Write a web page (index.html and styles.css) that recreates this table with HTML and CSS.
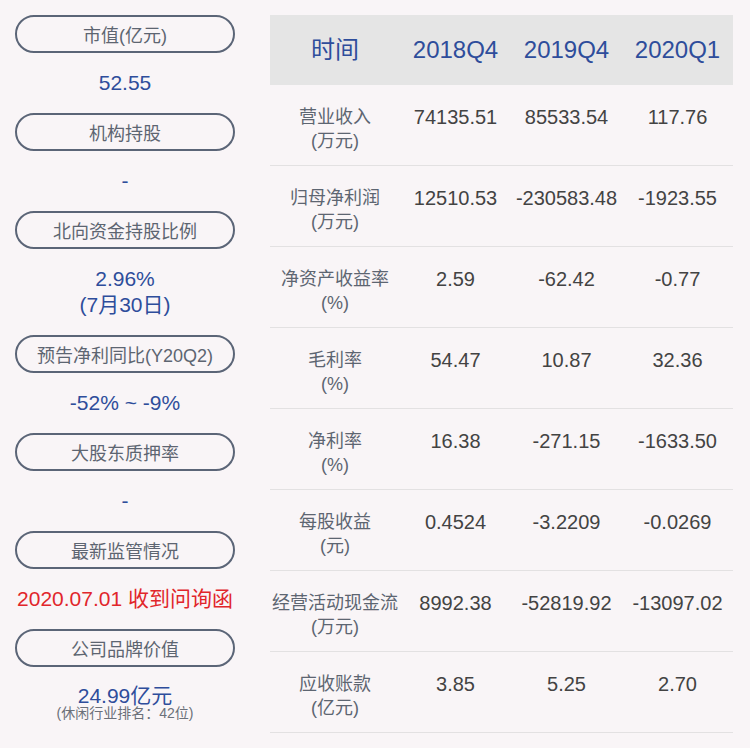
FILE: index.html
```html
<!DOCTYPE html>
<html lang="zh">
<head>
<meta charset="utf-8">
<link rel="stylesheet" href="styles.css">
</head>
<body>
<div class="page">
  <div class="side">
    <div class="pill">市值(亿元)</div>
    <div class="val">52.55</div>
    <div class="pill">机构持股</div>
    <div class="val">-</div>
    <div class="pill">北向资金持股比例</div>
    <div class="val">2.96%<br>(7月30日)</div>
    <div class="pill">预告净利同比(Y20Q2)</div>
    <div class="val">-52% ~ -9%</div>
    <div class="pill">大股东质押率</div>
    <div class="val">-</div>
    <div class="pill">最新监管情况</div>
    <div class="val red">2020.07.01 收到问询函</div>
    <div class="pill">公司品牌价值</div>
    <div class="val last">24.99亿元<span class="sub">(休闲行业排名：42位)</span></div>
  </div>
  <div class="table">
    <div class="row head">
      <div class="c lab">时间</div>
      <div class="c">2018Q4</div>
      <div class="c">2019Q4</div>
      <div class="c">2020Q1</div>
    </div>
    <div class="row">
      <div class="c lab">营业收入<br>(万元)</div>
      <div class="c">74135.51</div>
      <div class="c">85533.54</div>
      <div class="c">117.76</div>
    </div>
    <div class="row">
      <div class="c lab">归母净利润<br>(万元)</div>
      <div class="c">12510.53</div>
      <div class="c">-230583.48</div>
      <div class="c">-1923.55</div>
    </div>
    <div class="row">
      <div class="c lab">净资产收益率<br>(%)</div>
      <div class="c">2.59</div>
      <div class="c">-62.42</div>
      <div class="c">-0.77</div>
    </div>
    <div class="row">
      <div class="c lab">毛利率<br>(%)</div>
      <div class="c">54.47</div>
      <div class="c">10.87</div>
      <div class="c">32.36</div>
    </div>
    <div class="row">
      <div class="c lab">净利率<br>(%)</div>
      <div class="c">16.38</div>
      <div class="c">-271.15</div>
      <div class="c">-1633.50</div>
    </div>
    <div class="row">
      <div class="c lab">每股收益<br>(元)</div>
      <div class="c">0.4524</div>
      <div class="c">-3.2209</div>
      <div class="c">-0.0269</div>
    </div>
    <div class="row">
      <div class="c lab">经营活动现金流<br>(万元)</div>
      <div class="c">8992.38</div>
      <div class="c">-52819.92</div>
      <div class="c">-13097.02</div>
    </div>
    <div class="row">
      <div class="c lab">应收账款<br>(亿元)</div>
      <div class="c">3.85</div>
      <div class="c">5.25</div>
      <div class="c">2.70</div>
    </div>
  </div>
</div>
</body>
</html>
```
FILE: styles.css
```css
html, body {
  margin: 0;
  padding: 0;
  background: #f9f5f7;
}
body {
  font-family: "Liberation Sans", "Noto Sans CJK SC", sans-serif;
  width: 750px;
  height: 748px;
  overflow: hidden;
}
.page {
  display: flex;
  padding: 15px 17px 0 15px;
  gap: 35px;
}
.side {
  width: 220px;
  display: flex;
  flex-direction: column;
}
.pill {
  box-sizing: border-box;
  height: 38px;
  border: 2px solid #5b6577;
  border-radius: 19px;
  display: flex;
  align-items: center;
  justify-content: center;
  font-size: 18px;
  color: #5d6571;
}
.val {
  padding: 17px 0;
  text-align: center;
  font-size: 21px;
  line-height: 26px;
  color: #2e4d9b;
}
.val.red {
  color: #e1262b;
}
.val.last {
  padding-top: 16px;
}
.sub {
  display: block;
  font-size: 14px;
  line-height: 14px;
  color: #6b7079;
  margin-top: -3px;
}
.table {
  flex: 1;
  display: flex;
  flex-direction: column;
}
.row {
  display: grid;
  grid-template-columns: 130px 111px 111px 111px;
  height: 81px;
  box-sizing: border-box;
  border-bottom: 1px solid #e3e1e2;
  padding-top: 20px;
}
.c {
  text-align: center;
  font-size: 20px;
  line-height: 24px;
  color: #434343;
}
.c.lab {
  font-size: 18px;
  color: #5d6571;
}
.row.head {
  height: 70px;
  padding-top: 0;
  align-items: center;
  background: #e5e5e5;
  border-bottom: none;
}
.row.head .c {
  font-size: 24px;
  color: #2e4d9b;
}
```
